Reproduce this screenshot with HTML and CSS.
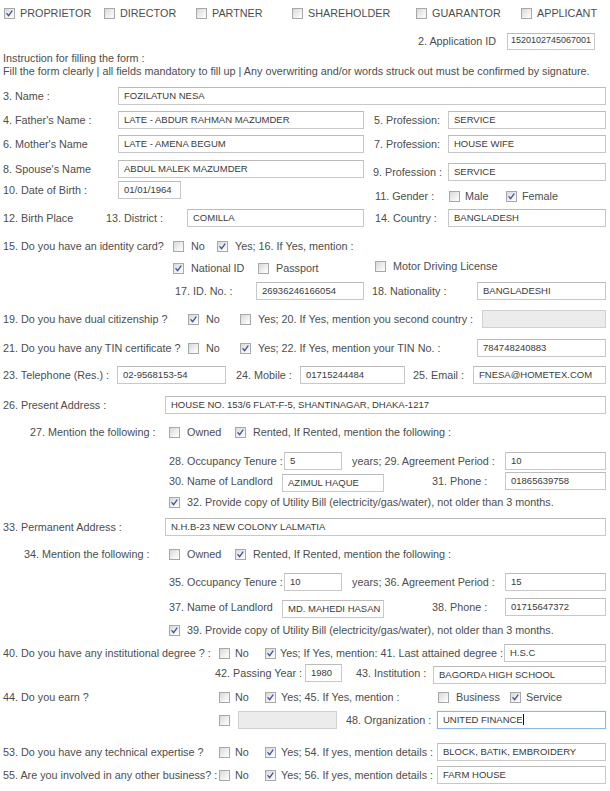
FILE: index.html
```html
<!DOCTYPE html>
<html>
<head>
<meta charset="utf-8">
<link rel="stylesheet" href="styles.css">
</head>
<body>
<div class="form">
  <svg class="watermark" width="360" height="370" viewBox="0 0 360 370">
    <g fill="none" stroke="#e1f3f9" stroke-linecap="round">
      <path d="M60 300 C 20 240, 15 150, 60 90" stroke-width="16"/>
      <path d="M95 320 C 40 250, 45 150, 100 100" stroke-width="10"/>
      <path d="M190 30 C 250 35, 300 70, 325 120" stroke-width="14"/>
      <path d="M170 60 C 230 60, 280 100, 300 150" stroke-width="8"/>
      <path d="M120 335 C 170 360, 240 355, 290 320" stroke-width="18"/>
      <path d="M150 300 C 190 320, 240 310, 270 280" stroke-width="8"/>
      <path d="M330 180 C 335 230, 320 270, 290 300" stroke-width="10"/>
      <path d="M110 70 C 140 50, 160 45, 180 45" stroke-width="8"/>
    </g>
    <g fill="#eaf7fb">
      <path d="M120 250 C 140 200, 190 170, 240 180 C 210 210, 170 240, 120 250 Z"/>
      <path d="M150 130 C 180 110, 220 115, 250 140 C 215 150, 180 148, 150 130 Z"/>
    </g>
  </svg>

  <div class="row top-row">
    <label class="opt w100 tight"><span class="cb on"><svg viewBox="0 0 11 11"><path d="M2.3 5.6 L4.5 8.2 L8.6 2.4"/></svg></span>PROPRIETOR</label>
    <label class="opt w92 tight"><span class="cb"></span>DIRECTOR</label>
    <label class="opt w96 tight"><span class="cb"></span>PARTNER</label>
    <label class="opt w124 tight"><span class="cb"></span>SHAREHOLDER</label>
    <label class="opt w105 tight"><span class="cb"></span>GUARANTOR</label>
    <label class="opt tight"><span class="cb"></span>APPLICANT</label>
  </div>

  <div class="row appid mt10">
    <span class="lbl">2. Application ID</span>
    <div class="field id-field">1520102745067001</div>
  </div>

  <p class="note mt2">Instruction for filling the form :</p>
  <p class="note">Fill the form clearly | all fields mandatory to fill up | Any overwriting and/or words struck out must be confirmed by signature.</p>

  <div class="row mt9">
    <span class="lbl w115">3. Name :</span>
    <div class="field grow">FOZILATUN NESA</div>
  </div>
  <div class="row mt6">
    <span class="lbl w115">4. Father's Name :</span>
    <div class="field w246">LATE - ABDUR RAHMAN MAZUMDER</div>
    <span class="lbl w74 ml10">5. Profession:</span>
    <div class="field grow">SERVICE</div>
  </div>
  <div class="row mt6">
    <span class="lbl w115">6. Mother's Name</span>
    <div class="field w246">LATE - AMENA BEGUM</div>
    <span class="lbl w74 ml10">7. Profession:</span>
    <div class="field grow">HOUSE WIFE</div>
  </div>
  <div class="row mt7">
    <span class="lbl w115">8. Spouse's Name</span>
    <div class="field w246">ABDUL MALEK MAZUMDER</div>
    <div class="group grow drop6 ml9">
      <span class="lbl w75">9. Profession :</span>
      <div class="field grow">SERVICE</div>
    </div>
  </div>
  <div class="row mt3">
    <span class="lbl w115">10. Date of Birth :</span>
    <div class="field w63">01/01/1964</div>
    <div class="group drop12 ml194">
      <span class="lbl w74">11. Gender :</span>
      <label class="opt w57 snug"><span class="cb"></span>Male</label>
      <label class="opt snug"><span class="cb on"><svg viewBox="0 0 11 11"><path d="M2.3 5.6 L4.5 8.2 L8.6 2.4"/></svg></span>Female</label>
    </div>
  </div>
  <div class="row mt10">
    <span class="lbl w103">12. Birth Place</span>
    <span class="lbl w81">13. District :</span>
    <div class="field w177">COMILLA</div>
    <span class="lbl w73 ml11">14. Country :</span>
    <div class="field grow">BANGLADESH</div>
  </div>
  <div class="row mt10">
    <span class="lbl w170">15. Do you have an identity card?</span>
    <label class="opt w44"><span class="cb"></span>No</label>
    <label class="opt"><span class="cb on"><svg viewBox="0 0 11 11"><path d="M2.3 5.6 L4.5 8.2 L8.6 2.4"/></svg></span>Yes; 16. If Yes, mention :</label>
  </div>
  <div class="row mt4">
    <span class="w170"></span>
    <label class="opt w85"><span class="cb on"><svg viewBox="0 0 11 11"><path d="M2.3 5.6 L4.5 8.2 L8.6 2.4"/></svg></span>National ID</label>
    <label class="opt w117"><span class="cb"></span>Passport</label>
    <label class="opt lift4"><span class="cb"></span>Motor Driving License</label>
  </div>
  <div class="row mt5">
    <span class="w172"></span>
    <span class="lbl w81">17. ID. No. :</span>
    <div class="field w108">26936246166054</div>
    <span class="lbl w105 ml8">18. Nationality :</span>
    <div class="field grow">BANGLADESHI</div>
  </div>
  <div class="row mt10">
    <span class="lbl w185">19. Do you have dual citizenship ?</span>
    <label class="opt w52"><span class="cb on"><svg viewBox="0 0 11 11"><path d="M2.3 5.6 L4.5 8.2 L8.6 2.4"/></svg></span>No</label>
    <label class="opt w242"><span class="cb"></span>Yes; 20. If Yes, mention you second country :</label>
    <div class="field grow off"></div>
  </div>
  <div class="row mt11">
    <span class="lbl w185">21. Do you have any TIN certificate ?</span>
    <label class="opt w52"><span class="cb"></span>No</label>
    <label class="opt w237"><span class="cb on"><svg viewBox="0 0 11 11"><path d="M2.3 5.6 L4.5 8.2 L8.6 2.4"/></svg></span>Yes; 22. If Yes, mention your TIN No. :</label>
    <div class="field grow">784748240883</div>
  </div>
  <div class="row mt9">
    <span class="lbl w114">23. Telephone (Res.) :</span>
    <div class="field w109">02-9568153-54</div>
    <span class="lbl w64 ml10">24. Mobile :</span>
    <div class="field w105">01715244484</div>
    <span class="lbl w60 ml8">25. Email :</span>
    <div class="field grow">FNESA@HOMETEX.COM</div>
  </div>
  <div class="row mt12">
    <span class="lbl w162">26. Present Address :</span>
    <div class="field grow">HOUSE NO. 153/6 FLAT-F-5, SHANTINAGAR, DHAKA-1217</div>
  </div>
  <div class="row mt9">
    <span class="lbl w166 ind27">27. Mention the following :</span>
    <label class="opt w66"><span class="cb"></span>Owned</label>
    <label class="opt"><span class="cb on"><svg viewBox="0 0 11 11"><path d="M2.3 5.6 L4.5 8.2 L8.6 2.4"/></svg></span>Rented, If Rented, mention the following :</label>
  </div>
  <div class="row mt11">
    <span class="w166"></span>
    <span class="lbl w115">28. Occupancy Tenure :</span>
    <div class="field w58">5</div>
    <span class="lbl w153 ml10">years; 29. Agreement Period :</span>
    <div class="field grow">10</div>
  </div>
  <div class="row mt2">
    <span class="w166"></span>
    <span class="lbl w113">30. Name of Landlord</span>
    <div class="field w102 drop4">AZIMUL HAQUE</div>
    <span class="lbl w121 pl48">31. Phone :</span>
    <div class="field grow">01865639758</div>
  </div>
  <div class="row mt3">
    <span class="w166"></span>
    <label class="opt"><span class="cb on"><svg viewBox="0 0 11 11"><path d="M2.3 5.6 L4.5 8.2 L8.6 2.4"/></svg></span>32. Provide copy of Utility Bill (electricity/gas/water), not older than 3 months.</label>
  </div>
  <div class="row mt7">
    <span class="lbl w162">33. Permanent Address :</span>
    <div class="field grow">N.H.B-23 NEW COLONY LALMATIA</div>
  </div>
  <div class="row mt9">
    <span class="lbl w166 ind34">34. Mention the following :</span>
    <label class="opt w66"><span class="cb"></span>Owned</label>
    <label class="opt"><span class="cb on"><svg viewBox="0 0 11 11"><path d="M2.3 5.6 L4.5 8.2 L8.6 2.4"/></svg></span>Rented, If Rented, mention the following :</label>
  </div>
  <div class="row mt10">
    <span class="w166"></span>
    <span class="lbl w115">35. Occupancy Tenure :</span>
    <div class="field w58">10</div>
    <span class="lbl w153 ml10">years; 36. Agreement Period :</span>
    <div class="field grow">15</div>
  </div>
  <div class="row mt7">
    <span class="w166"></span>
    <span class="lbl w113">37. Name of Landlord</span>
    <div class="field w102 drop4">MD. MAHEDI HASAN</div>
    <span class="lbl w121 pl48">38. Phone :</span>
    <div class="field grow">01715647372</div>
  </div>
  <div class="row mt5">
    <span class="w166"></span>
    <label class="opt"><span class="cb on"><svg viewBox="0 0 11 11"><path d="M2.3 5.6 L4.5 8.2 L8.6 2.4"/></svg></span>39. Provide copy of Utility Bill (electricity/gas/water), not older than 3 months.</label>
  </div>
  <div class="row mt5">
    <span class="lbl w216">40. Do you have any institutional degree ? :</span>
    <label class="opt w46 snug"><span class="cb"></span>No</label>
    <label class="opt w239 fine"><span class="cb on"><svg viewBox="0 0 11 11"><path d="M2.3 5.6 L4.5 8.2 L8.6 2.4"/></svg></span>Yes; If Yes, mention: 41. Last attained degree :</label>
    <div class="field grow">H.S.C</div>
  </div>
  <div class="row mt2">
    <span class="w212"></span>
    <span class="lbl w90">42. Passing Year :</span>
    <div class="field w37">1980</div>
    <span class="lbl w77 ml14">43. Institution :</span>
    <div class="field grow drop4">BAGORDA HIGH SCHOOL</div>
  </div>
  <div class="row mt6">
    <span class="lbl w216">44. Do you earn ?</span>
    <label class="opt w46 snug"><span class="cb"></span>No</label>
    <label class="opt w173 snug"><span class="cb on"><svg viewBox="0 0 11 11"><path d="M2.3 5.6 L4.5 8.2 L8.6 2.4"/></svg></span>Yes; 45. If Yes, mention :</label>
    <label class="opt w72"><span class="cb"></span>Business</label>
    <label class="opt snug"><span class="cb on"><svg viewBox="0 0 11 11"><path d="M2.3 5.6 L4.5 8.2 L8.6 2.4"/></svg></span>Service</label>
  </div>
  <div class="row mt5">
    <span class="w216"></span>
    <span class="w19"><span class="cb"></span></span>
    <div class="field w99 off"></div>
    <span class="lbl w91 ml9">48. Organization :</span>
    <div class="field grow focus">UNITED FINANCE<span class="caret"></span></div>
  </div>
  <div class="row mt14">
    <span class="lbl w216">53. Do you have any technical expertise ?</span>
    <label class="opt w46 snug"><span class="cb"></span>No</label>
    <label class="opt w172 snug"><span class="cb on"><svg viewBox="0 0 11 11"><path d="M2.3 5.6 L4.5 8.2 L8.6 2.4"/></svg></span>Yes; 54. If yes, mention details :</label>
    <div class="field grow">BLOCK, BATIK, EMBROIDERY</div>
  </div>
  <div class="row mt5">
    <span class="lbl w216">55. Are you involved in any other business? :</span>
    <label class="opt w46 snug"><span class="cb"></span>No</label>
    <label class="opt w172 snug"><span class="cb on"><svg viewBox="0 0 11 11"><path d="M2.3 5.6 L4.5 8.2 L8.6 2.4"/></svg></span>Yes; 56. If yes, mention details :</label>
    <div class="field grow">FARM HOUSE</div>
  </div>
</div>
</body>
</html>
```

FILE: styles.css
```css
html, body {
  margin: 0;
  background: #ffffff;
}
body {
  font-family: "Liberation Sans", Arial, sans-serif;
  font-size: 10.8px;
  color: #4d4d4d;
}
.form {
  position: relative;
  width: 603px;
  padding: 0 4px 0 3px;
}
.watermark {
  position: absolute;
  left: 127px;
  top: 178px;
  z-index: -1;
}
.row {
  display: flex;
  align-items: center;
  height: 18px;
  white-space: nowrap;
}
.top-row { margin-top: 4px; padding-left: 1px; }
.appid { justify-content: flex-end; }
.appid .lbl { margin-right: 11px; }
.note {
  margin: 0;
  height: 13px;
  line-height: 13px;
  white-space: nowrap;
}
.lbl { flex: none; }
.group { display: flex; align-items: center; }
.opt {
  display: inline-flex;
  align-items: center;
  gap: 7px;
  flex: none;
}
.opt.tight { gap: 5px; }
.opt.snug { gap: 5px; }
.opt.fine { gap: 4px; }
.cb {
  display: inline-block;
  box-sizing: border-box;
  width: 11px;
  height: 11px;
  border: 1px solid #a8a8a8;
  background: linear-gradient(135deg, #d8d8d8 0%, #f1f1f1 60%, #ffffff 100%);
  flex: none;
  position: relative;
}
.cb svg {
  position: absolute;
  left: 0;
  top: 0;
  width: 9px;
  height: 9px;
}
.cb svg path {
  fill: none;
  stroke: #43559a;
  stroke-width: 1.6;
  stroke-linecap: round;
  stroke-linejoin: round;
}
.field {
  box-sizing: border-box;
  height: 18px;
  border: 1px solid #c8c8c8;
  border-top-color: #bbbbbb;
  background: #ffffff;
  padding: 0 5px;
  font-size: 9.5px;
  line-height: 16px;
  color: #3a3a3a;
  flex: none;
  overflow: hidden;
}
.field.id-field {
  width: 88px;
  margin-right: 11px;
  font-size: 9px;
  padding: 0 3px;
  line-height: 13px;
  height: 17px;
}
.field.grow, .group.grow { flex: 1; }
.field.off {
  background: #ececec;
  border-color: #d0d0d0;
}
.field.focus {
  border-color: #8db7e3;
  box-shadow: 0 0 1px #b6d3f1;
}
.caret {
  display: inline-block;
  width: 1px;
  height: 11px;
  background: #111111;
  vertical-align: -2px;
}
.drop4 { margin-top: 4px; }
.drop6 { margin-top: 6px; }
.drop12 { margin-top: 12px; }
.lift4 { margin-bottom: 4px; }
.ind27 { padding-left: 27px; box-sizing: border-box; }
.ind34 { padding-left: 21px; box-sizing: border-box; }
.pl48 { padding-left: 48px; box-sizing: border-box; }

.mt2 { margin-top: 2px; }
.mt3 { margin-top: 3px; }
.mt4 { margin-top: 4px; }
.mt5 { margin-top: 5px; }
.mt6 { margin-top: 6px; }
.mt7 { margin-top: 7px; }
.mt9 { margin-top: 9px; }
.mt10 { margin-top: 10px; }
.mt11 { margin-top: 11px; }
.mt12 { margin-top: 12px; }
.mt14 { margin-top: 14px; }
.ml8 { margin-left: 8px; }
.ml9 { margin-left: 9px; }
.ml10 { margin-left: 10px; }
.ml11 { margin-left: 11px; }
.ml14 { margin-left: 14px; }
.ml194 { margin-left: 194px; }

.w19 { width: 19px; flex: none; display: inline-flex; }
.w37 { width: 37px; }
.w44 { width: 44px; }
.w46 { width: 46px; }
.w52 { width: 52px; }
.w57 { width: 57px; }
.w58 { width: 58px; }
.w60 { width: 60px; }
.w63 { width: 63px; }
.w64 { width: 64px; }
.w66 { width: 66px; }
.w72 { width: 72px; }
.w73 { width: 73px; }
.w74 { width: 74px; }
.w75 { width: 75px; }
.w77 { width: 77px; }
.w81 { width: 81px; }
.w85 { width: 85px; }
.w90 { width: 90px; }
.w91 { width: 91px; }
.w92 { width: 92px; }
.w96 { width: 96px; }
.w99 { width: 99px; }
.w100 { width: 100px; }
.w102 { width: 102px; }
.w103 { width: 103px; }
.w105 { width: 105px; }
.w108 { width: 108px; }
.w109 { width: 109px; }
.w113 { width: 113px; }
.w114 { width: 114px; }
.w115 { width: 115px; }
.w117 { width: 117px; }
.w121 { width: 121px; }
.w124 { width: 124px; }
.w153 { width: 153px; }
.w162 { width: 162px; }
.w166 { width: 166px; flex: none; }
.w170 { width: 170px; flex: none; }
.w172 { width: 172px; flex: none; }
.w173 { width: 173px; }
.w177 { width: 177px; }
.w185 { width: 185px; }
.w212 { width: 212px; flex: none; }
.w216 { width: 216px; flex: none; }
.w237 { width: 237px; }
.w239 { width: 239px; }
.w242 { width: 242px; }
.w246 { width: 246px; }
```
